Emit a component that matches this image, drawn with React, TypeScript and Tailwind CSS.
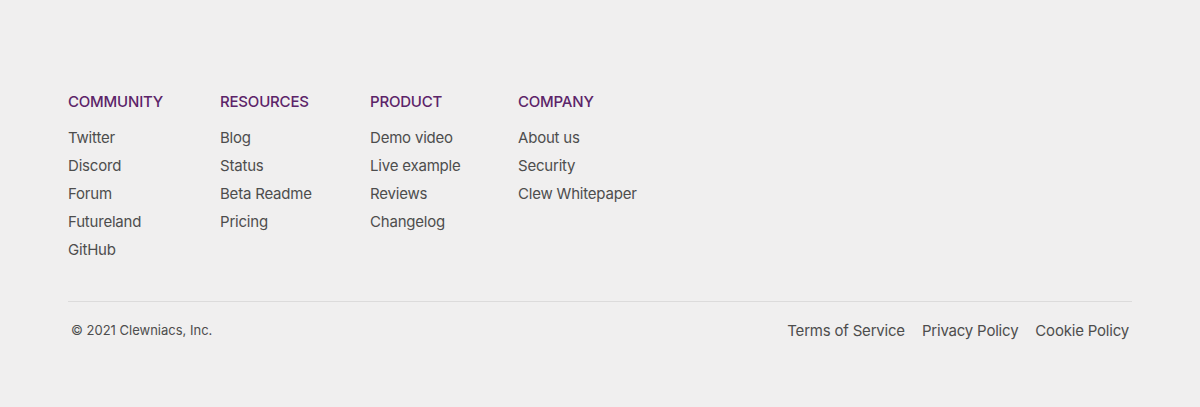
const columns = [
  { title: 'Community', links: ['Twitter', 'Discord', 'Forum', 'Futureland', 'GitHub'], w: 'w-[152px]' },
  { title: 'Resources', links: ['Blog', 'Status', 'Beta Readme', 'Pricing'], w: 'w-[150px]' },
  { title: 'Product', links: ['Demo video', 'Live example', 'Reviews', 'Changelog'], w: 'w-[148px]' },
  { title: 'Company', links: ['About us', 'Security', 'Clew Whitepaper'], w: 'w-[160px]' },
]

export default function App() {
  return (
    <div className="min-h-[407px] bg-[#f0efef] font-['Inter',sans-serif] antialiased tracking-[-0.2px]">
      <footer className="mx-auto w-[1064px] pt-[92px] pb-[60px]">
        <div className="flex">
          {columns.map((col) => (
            <div key={col.title} className={col.w}>
              <h3 className="text-[15px] leading-5 font-medium uppercase text-[#5c2469]">
                {col.title}
              </h3>
              <ul className="mt-3">
                {col.links.map((l) => (
                  <li key={l}>
                    <a href="#" className="block text-[15px] leading-7 text-[#4d4d4d]">
                      {l}
                    </a>
                  </li>
                ))}
              </ul>
            </div>
          ))}
        </div>
        <div className="mt-[37px] border-t border-[#dcdbdb] pt-[19px] flex items-center justify-between px-[3px]">
          <p className="text-[13px] leading-5 tracking-normal text-[#4d4d4d] -mt-[2px]">© 2021 Clewniacs, Inc.</p>
          <nav className="flex gap-[17px]">
            <a href="#" className="text-[15px] leading-5 text-[#4d4d4d]">Terms of Service</a>
            <a href="#" className="text-[15px] leading-5 text-[#4d4d4d]">Privacy Policy</a>
            <a href="#" className="text-[15px] leading-5 text-[#4d4d4d]">Cookie Policy</a>
          </nav>
        </div>
      </footer>
    </div>
  )
}
